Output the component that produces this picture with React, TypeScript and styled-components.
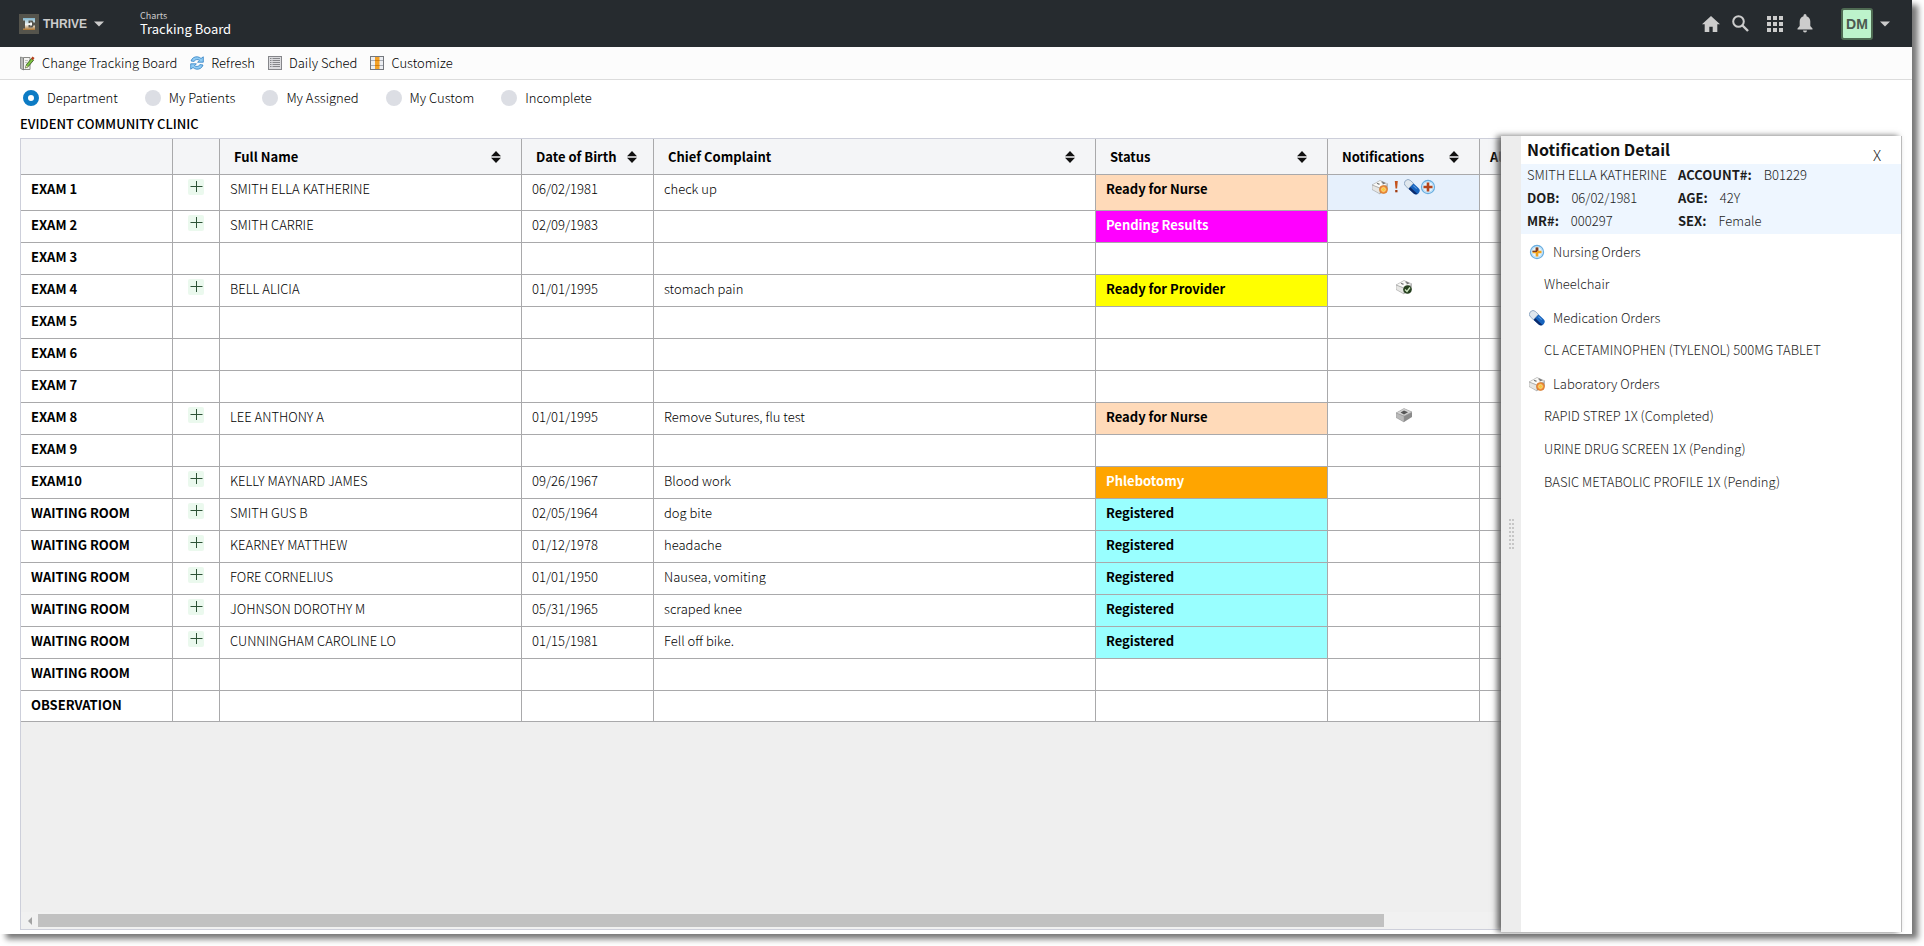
import React from "react";
import styled, { createGlobalStyle, css } from "styled-components";

const Global = createGlobalStyle`
  *, *::before, *::after { box-sizing: border-box; }
  body {
    margin: 0;
    background: #fff;
    color: #000;
    font: 300 13px/18px "Noto Sans CJK SC", sans-serif;
  }
  button { font: inherit; color: inherit; background: none; border: 0; padding: 0; margin: 0; cursor: pointer; }
`;

const Page = styled.div`
  height: 100vh;
  padding: 0 12px 12px 0;
`;

const Window = styled.div`
  position: relative;
  height: 100%;
  display: flex;
  flex-direction: column;
  background: #fff;
  box-shadow: 6px 5px 6px #777;
`;

/* ---------- header ---------- */

const Header = styled.header`
  display: flex;
  align-items: center;
  height: 47px;
  flex: none;
  padding: 0 22px 0 19px;
  background: #262b2f;
  color: #ccc;
`;

const Brand = styled.button`
  display: flex;
  align-items: center;
  gap: 4px;
  width: 121px;
  font: bold 12px/20px "Liberation Sans", Arial, sans-serif;
  svg:last-child { margin-left: 3px; }
`;

const Crumbs = styled.div`
  flex: 1;
  display: flex;
  flex-direction: column;
  padding-bottom: 2px;
`;

const CrumbParent = styled.span`
  font-size: 9px;
  line-height: 12px;
  font-weight: 400;
`;

const CrumbTitle = styled.h1`
  margin: 0;
  font-size: 13px;
  line-height: 14px;
  font-weight: 400;
  color: #fff;
`;

const HeaderTools = styled.nav`
  display: flex;
  align-items: center;
  button { display: flex; }
`;

const ToolGap = styled.span<{ $w: number }>`
  width: ${(p) => p.$w}px;
`;

const Avatar = styled.span`
  display: block;
  width: 32px;
  height: 32px;
  border: 2px solid #4f6b53;
  border-radius: 3px;
  background: #bdf3cb;
  color: #4c5a50;
  text-align: center;
  font: bold 14px/28px "Liberation Sans", Arial, sans-serif;
`;

/* ---------- toolbar ---------- */

const Toolbar = styled.div`
  display: flex;
  align-items: center;
  gap: 13px;
  height: 33px;
  flex: none;
  padding: 0 20px;
  background: #fcfcfc;
  border-bottom: 1px solid #dcdcdc;
`;

const ToolButton = styled.button`
  display: flex;
  align-items: center;
  gap: 7px;
`;

const Filters = styled.fieldset`
  display: flex;
  gap: 27px;
  flex: none;
  border: 0;
  margin: 0;
  padding: 9px 23px;
`;

const FilterLabel = styled.label`
  display: flex;
  align-items: center;
  gap: 8px;
`;

const Radio = styled.input`
  appearance: none;
  width: 16px;
  height: 16px;
  margin: 0;
  border-radius: 50%;
  background: #dcdee4;
  &:checked {
    background: #fff;
    border: 5px solid #0c7bc4;
  }
`;

const Clinic = styled.h2`
  margin: 0;
  padding: 0 20px;
  flex: none;
  height: 22px;
  font-size: 13px;
  line-height: 16px;
  font-weight: 500;
`;

/* ---------- grid ---------- */

const Board = styled.main`
  flex: 1;
  min-height: 0;
  margin: 0 10px 4px 20px;
  display: flex;
  flex-direction: column;
  border: 1px solid #cdcfda;
  background: #efefef;
  overflow: hidden;
`;

const GridScroll = styled.div`
  flex: 1;
  min-height: 0;
  overflow: hidden;
`;

const Grid = styled.table`
  width: 1920px;
  table-layout: fixed;
  border-collapse: separate;
  border-spacing: 0;
  background: #fff;
`;

const HeadCell = styled.th<{ $pad?: string }>`
  height: 36px;
  padding: ${(p) => p.$pad || "0 20px 0 14px"};
  border: solid #a9a9ab;
  border-width: 0 1px 1px 0;
  background: #f4f5f7;
  text-align: left;
`;

const HeadInner = styled.button`
  display: flex;
  align-items: center;
  justify-content: space-between;
  width: 100%;
  font-weight: 700;
  white-space: nowrap;
`;

const cell = css`
  padding: 5px 10px 0;
  border: solid #a9a9ab;
  border-width: 0 1px 1px 0;
  text-align: left;
  vertical-align: top;
`;

const Row = styled.tr<{ $tall?: boolean }>`
  height: ${(p) => (p.$tall ? 36 : 32)}px;
  &:last-child { height: 31px; }
`;

const Cell = styled.td`
  ${cell}
`;

const IconCell = styled.td<{ $selected?: boolean }>`
  ${cell}
  padding-top: 4px;
  background: ${(p) => (p.$selected ? "#e6f0fc" : "#fff")};
`;

const RoomCell = styled.th`
  ${cell}
  font-weight: 700;
`;

const StatusCell = styled.td<{ $bg?: string; $fg?: string }>`
  ${cell}
  font-weight: 700;
  background: ${(p) => p.$bg || "#fff"};
  color: ${(p) => p.$fg || "#000"};
`;

const AddButton = styled.button`
  display: block;
  width: 16px;
  height: 16px;
  margin: 0 auto;
  border-radius: 2px;
  background: #ebf9ee;
  svg { display: block; }
`;

const IconRow = styled.div`
  display: flex;
  justify-content: center;
`;

const Scrollbar = styled.div`
  flex: none;
  display: flex;
  align-items: center;
  height: 17px;
  background: #f1f1f1;
`;

const ScrollArrow = styled.button`
  display: flex;
  justify-content: center;
  width: 17px;
`;

const Thumb = styled.div`
  width: 71.6%;
  height: 13px;
  background: #c1c1c1;
`;

/* ---------- detail panel ---------- */

const Panel = styled.aside`
  position: absolute;
  top: 136px;
  right: 10px;
  bottom: 2px;
  width: 401px;
  display: flex;
  background: #fff;
  border-right: 1px solid #bbb;
  box-shadow: -4px 0 6px #666;
`;

const Splitter = styled.div`
  flex: none;
  display: flex;
  align-items: center;
  justify-content: center;
  width: 20px;
  background: #ededed;
`;

const PanelBody = styled.div`
  flex: 1;
  color: #1c1c1c;
`;

const PanelHead = styled.div`
  display: flex;
  justify-content: space-between;
  height: 28px;
  padding: 0 20px 0 6px;
`;

const PanelTitle = styled.h2`
  margin: 0;
  font-size: 16px;
  line-height: 26px;
  font-weight: 700;
  color: #111;
`;

const Close = styled.button`
  padding-top: 10px;
  font-size: 15px;
`;

const Info = styled.dl`
  display: grid;
  grid-template-columns: 151px 1fr;
  row-gap: 1px;
  margin: 0;
  padding: 0 6px 2px;
  background: #eef6ff;
  line-height: 22px;
`;

const InfoItem = styled.div`
  display: flex;
  gap: 12px;
  white-space: nowrap;
  dt { font-weight: 700; }
  dd { margin: 0; }
`;

const Orders = styled.div`
  padding: 0 8px;
`;

const OrderHead = styled.h3`
  display: flex;
  align-items: center;
  gap: 8px;
  margin: 0;
  padding-top: 2px;
  font-size: 13px;
  line-height: 32px;
  font-weight: 300;
`;

const OrderList = styled.ul`
  list-style: none;
  margin: 0;
  padding: 0 0 0 15px;
  line-height: 32px;
  li + li { margin-top: 1px; }
`;

/* ---------- icons ---------- */

const Caret = () => (
  <svg width="10" height="6" viewBox="0 0 10 6"><path d="M0 .5h10L5 5.5z" fill="#ccc" /></svg>
);

const Logo = () => (
  <svg width="20" height="20" viewBox="0 0 20 20">
    <defs>
      <linearGradient id="logo" x1="0" y1="0" x2="0" y2="1">
        <stop offset="0" stopColor="#7fb4cc" /><stop offset=".55" stopColor="#f2f4f2" /><stop offset="1" stopColor="#a86f2a" />
      </linearGradient>
    </defs>
    <rect width="20" height="20" fill="#55544c" />
    <path d="M4 4h12v4.500h-1.500L13.500 6.500H9.500v2.500h3v2h-3v2.500h4l1-2H16V16H4v-1.500h2V6.500H4z" fill="url(#logo)" />
    <path d="M11.500 7.500l1.500 1.500v2l-1.500 1.500z" fill="#fff" />
  </svg>
);

const HomeIcon = () => (
  <svg width="18" height="16" viewBox="0 0 18 16"><path d="M9 0L0 8.200h2.700V16h4.600v-5.200h3.400V16h4.600V8.200H18z" fill="#ccc" /></svg>
);

const SearchIcon = () => (
  <svg width="17" height="17" viewBox="0 0 17 17" fill="none" stroke="#ccc">
    <circle cx="6.500" cy="6.500" r="5.300" strokeWidth="2" /><path d="M10.500 10.500l5.500 5.500" strokeWidth="2.400" />
  </svg>
);

const AppsIcon = () => (
  <svg width="16" height="16" viewBox="0 0 16 16" fill="#ccc">
    {[0, 6, 12].map((y) => [0, 6, 12].map((x) => <rect key={`${x}-${y}`} x={x} y={y} width="4" height="4" />))}
  </svg>
);

const BellIcon = () => (
  <svg width="16" height="19" viewBox="0 0 16 19" fill="#ccc">
    <path d="M8 0a1.500 1.500 0 0 0-1.500 1.500v.7C4 2.900 2.700 5 2.700 7.600V12L.5 14.600v1h15v-1L13.300 12V7.600C13.300 5 12 2.900 9.500 2.200v-.7A1.500 1.500 0 0 0 8 0zM6 16.600a2 2 0 0 0 4 0z" />
  </svg>
);

const EditIcon = () => (
  <svg width="15" height="15" viewBox="0 0 15 15">
    <path d="M3.500 1.500H10v12H3z" fill="#f4f4f1" stroke="#8a8a86" />
    <path d="M.5 1l3 1v12l-3-1.500z" fill="#b9bab8" stroke="#6f706e" strokeWidth=".7" />
    <path d="M5 4.500h3M5 6.500h2" stroke="#c4c4c0" />
    <path d="M5.500 12l1-3.500L11.500 2.500l2 1.800-5.500 6.500z" fill="#7cc440" stroke="#2f4d1a" strokeWidth=".8" />
    <path d="M11 2.500L12.500.6l2 1.400-1.500 2.200z" fill="#b8401c" />
    <path d="M5.500 12l.8-2.500 1.500 1.300z" fill="#efe2b0" />
  </svg>
);

const RefreshIcon = () => (
  <svg width="14" height="14" viewBox="0 0 14 14">
    <path d="M1 5C2 1.900 4.700.5 7.500.8c1.400.2 2.600.8 3.500 1.700L13.300.8v5.400H7.600l1.900-1.900C8 3.100 5.500 3.200 4 5.400z" fill="#8fcbf3" stroke="#2f7fc4" strokeWidth=".8" />
    <path d="M13 9c-1 3.100-3.700 4.500-6.500 4.200-1.400-.2-2.600-.8-3.500-1.700L.7 13.200V7.800h5.700L4.500 9.700C6 10.900 8.500 10.800 10 8.600z" fill="#8fcbf3" stroke="#2f7fc4" strokeWidth=".8" />
  </svg>
);

const SchedIcon = () => (
  <svg width="14" height="14" viewBox="0 0 14 14">
    <rect x=".5" y=".5" width="13" height="13" fill="#dcdcdf" stroke="#85868a" />
    {[2, 4, 6, 8, 10].map((y) => <path key={y} d={`M2 ${y}.5h1.500M4.500 ${y}.5H12`} stroke="#85868a" />)}
  </svg>
);

const ColumnsIcon = () => (
  <svg width="14" height="14" viewBox="0 0 14 14">
    <rect x=".5" y=".5" width="13" height="13" fill="#eceef2" stroke="#74777d" />
    <path d="M1 4.500h12M1 9.500h12" stroke="#a6abb5" />
    <rect x="5" y="1" width="4.500" height="12" fill="#f2a128" />
    <path d="M5 4.500h4.500M5 9.500h4.500" stroke="#cf7c10" />
  </svg>
);

const SortIcon = () => (
  <svg width="10" height="12" viewBox="0 0 10 12" fill="#111"><path d="M5 0l5 5.300H0zM5 12L0 6.700h10z" /></svg>
);

const PlusIcon = () => (
  <svg width="16" height="16" viewBox="0 0 16 16"><path d="M8.500 2v11M2.500 7.500h12" stroke="#2d5236" /></svg>
);

const Box = ({ badge, dark }: { badge?: "pending" | "done"; dark?: boolean }) => (
  <svg width="16" height="16" viewBox="0 0 16 16">
    <path d="M0 6L8 1.500 16 5v5L8 15 0 10z" fill={dark ? "#8b8b8b" : "#b9b9b9"} />
    <path d="M0 6L8 1.500 16 5 8 9z" fill={dark ? "#d4d4d4" : "#fafaf8"} stroke="#a5a5a5" strokeWidth=".5" />
    <path d="M0 6l8 3.200V15l-8-4.500z" fill={dark ? "#b9b9b9" : "#e6e6e4"} stroke="#999" strokeWidth=".5" />
    {dark ? <path d="M4.500 5.500L8 3.500l4 1.800-4 2.200z" fill="#555" /> : <path d="M5 4.200l2.500 1.200M9.500 2.800l3 1.400-2 .8" fill="none" stroke="#777" strokeWidth="1.200" />}
    {badge === "pending" && (
      <><circle cx="11.500" cy="10.500" r="4" fill="#f0913c" stroke="#c9691c" strokeWidth=".6" /><circle cx="11.500" cy="10.500" r="2" fill="#f8c93a" stroke="#fbe2a8" strokeWidth=".6" /></>
    )}
    {badge === "done" && (
      <><circle cx="11.500" cy="10.500" r="4.300" fill="#26401f" /><path d="M9 10.500l2 2 3-4" fill="none" stroke="#cfe8c2" strokeWidth="1.300" /></>
    )}
  </svg>
);

const Alert = () => (
  <svg width="16" height="16" viewBox="0 0 16 16">
    <path d="M6.800 2h3l-.7 7.500H7.500z" fill="#c4521c" /><rect x="7.200" y="11" width="2.300" height="2.300" fill="#a13c10" />
  </svg>
);

const Pill = () => (
  <svg width="16" height="16" viewBox="0 0 16 16">
    <g transform="rotate(43 8 8)">
      <rect x="-1" y="4.300" width="18" height="7.400" rx="3.700" fill="#1763bd" />
      <path d="M6.500 4.300H2.700a3.700 3.700 0 0 0 0 7.400H6.500z" fill="#dfe7ee" stroke="#8fa0b2" strokeWidth=".6" />
      <path d="M7 9.300h9.700a3.700 3.700 0 0 1-3.400 2.400H7z" fill="#0b2a6b" />
      <path d="M8 6h4.500" stroke="#5c9ae2" />
    </g>
  </svg>
);

const Nursing = ({ gold }: { gold?: boolean }) => (
  <svg width="16" height="16" viewBox="0 0 16 16">
    <circle cx="8" cy="8" r="6.500" fill="#e3f3ff" stroke="#69aee0" strokeWidth="1.300" />
    <circle cx="8" cy="8" r="5.300" fill="none" stroke="#b8def8" />
    <path d="M6.700 3.500h2.600v3.200h3.200v2.600H9.300v3.200H6.700V9.300H3.500V6.700h3.200z" fill={gold ? "#f0a21c" : "#b5451b"} />
    {gold && <path d="M6.700 3.500h2.600v3.200H8V8H3.500V6.700h3.200z" fill="#7a3b2a" />}
  </svg>
);

const Grip = () => (
  <svg width="5" height="30" viewBox="0 0 5 30" fill="#c6c6c6">
    {[0, 4, 8, 12, 16, 20, 24, 28].map((y) => <React.Fragment key={y}><rect y={y} width="2" height="2" /><rect x="3" y={y} width="2" height="2" /></React.Fragment>)}
  </svg>
);

/* ---------- data ---------- */

type Status = "nurse" | "pending" | "provider" | "phleb" | "reg";

const STATUS: Record<Status, { text: string; bg: string; fg?: string }> = {
  nurse: { text: "Ready for Nurse", bg: "#ffdab9" },
  pending: { text: "Pending Results", bg: "#ff00ff", fg: "#fff" },
  provider: { text: "Ready for Provider", bg: "#ffff00" },
  phleb: { text: "Phlebotomy", bg: "#ffa500", fg: "#fff" },
  reg: { text: "Registered", bg: "#99ffff" },
};

type Entry = { room: string; name?: string; dob?: string; complaint?: string; status?: Status; icons?: React.ReactNode };

const ROWS: Entry[] = [
  { room: "EXAM 1", name: "SMITH ELLA KATHERINE", dob: "06/02/1981", complaint: "check up", status: "nurse", icons: <><Box badge="pending" /><Alert /><Pill /><Nursing /></> },
  { room: "EXAM 2", name: "SMITH CARRIE", dob: "02/09/1983", status: "pending" },
  { room: "EXAM 3" },
  { room: "EXAM 4", name: "BELL ALICIA", dob: "01/01/1995", complaint: "stomach pain", status: "provider", icons: <Box badge="done" /> },
  { room: "EXAM 5" },
  { room: "EXAM 6" },
  { room: "EXAM 7" },
  { room: "EXAM 8", name: "LEE ANTHONY A", dob: "01/01/1995", complaint: "Remove Sutures, flu test", status: "nurse", icons: <Box dark /> },
  { room: "EXAM 9" },
  { room: "EXAM10", name: "KELLY MAYNARD JAMES", dob: "09/26/1967", complaint: "Blood work", status: "phleb" },
  { room: "WAITING ROOM", name: "SMITH GUS B", dob: "02/05/1964", complaint: "dog bite", status: "reg" },
  { room: "WAITING ROOM", name: "KEARNEY MATTHEW", dob: "01/12/1978", complaint: "headache", status: "reg" },
  { room: "WAITING ROOM", name: "FORE CORNELIUS", dob: "01/01/1950", complaint: "Nausea, vomiting", status: "reg" },
  { room: "WAITING ROOM", name: "JOHNSON DOROTHY M", dob: "05/31/1965", complaint: "scraped knee", status: "reg" },
  { room: "WAITING ROOM", name: "CUNNINGHAM CAROLINE LO", dob: "01/15/1981", complaint: "Fell off bike.", status: "reg" },
  { room: "WAITING ROOM" },
  { room: "OBSERVATION" },
];

const COLUMNS: { label: string; width: number; pad?: string }[] = [
  { label: "", width: 152 },
  { label: "", width: 47 },
  { label: "Full Name", width: 302 },
  { label: "Date of Birth", width: 132, pad: "0 16px 0 14px" },
  { label: "Chief Complaint", width: 442 },
  { label: "Status", width: 232 },
  { label: "Notifications", width: 152 },
  { label: "Alerts", width: 461, pad: "0 10px" },
];

const FILTERS = ["Department", "My Patients", "My Assigned", "My Custom", "Incomplete"];

const TOOLS = [
  { label: "Change Tracking Board", icon: <EditIcon /> },
  { label: "Refresh", icon: <RefreshIcon /> },
  { label: "Daily Sched", icon: <SchedIcon /> },
  { label: "Customize", icon: <ColumnsIcon /> },
];

const INFO = [
  ["", "SMITH ELLA KATHERINE"],
  ["ACCOUNT#:", "B01229"],
  ["DOB:", "06/02/1981"],
  ["AGE:", "42Y"],
  ["MR#:", "000297"],
  ["SEX:", "Female"],
];

const ORDERS = [
  { title: "Nursing Orders", icon: <Nursing gold />, items: ["Wheelchair"] },
  { title: "Medication Orders", icon: <Pill />, items: ["CL ACETAMINOPHEN (TYLENOL) 500MG TABLET"] },
  { title: "Laboratory Orders", icon: <Box badge="pending" />, items: ["RAPID STREP 1X (Completed)", "URINE DRUG SCREEN 1X (Pending)", "BASIC METABOLIC PROFILE 1X (Pending)"] },
];

export default function App() {
  return (
    <Page>
      <Global />
      <Window>
        <Header>
          <Brand><Logo />THRIVE<Caret /></Brand>
          <Crumbs>
            <CrumbParent>Charts</CrumbParent>
            <CrumbTitle>Tracking Board</CrumbTitle>
          </Crumbs>
          <HeaderTools>
            <button aria-label="Home"><HomeIcon /></button>
            <ToolGap $w={12} />
            <button aria-label="Search"><SearchIcon /></button>
            <ToolGap $w={18} />
            <button aria-label="Apps"><AppsIcon /></button>
            <ToolGap $w={14} />
            <button aria-label="Alerts"><BellIcon /></button>
            <ToolGap $w={28} />
            <Avatar>DM</Avatar>
            <ToolGap $w={7} />
            <button aria-label="Account menu"><Caret /></button>
          </HeaderTools>
        </Header>
        <Toolbar>
          {TOOLS.map((t) => <ToolButton key={t.label}>{t.icon}{t.label}</ToolButton>)}
        </Toolbar>
        <Filters>
          {FILTERS.map((f, i) => (
            <FilterLabel key={f}><Radio type="radio" name="view" defaultChecked={i === 0} />{f}</FilterLabel>
          ))}
        </Filters>
        <Clinic>EVIDENT COMMUNITY CLINIC</Clinic>
        <Board>
          <GridScroll>
            <Grid>
              <colgroup>{COLUMNS.map((c, i) => <col key={i} style={{ width: c.width }} />)}</colgroup>
              <thead>
                <tr>
                  {COLUMNS.map((c, i) => (
                    <HeadCell key={i} $pad={c.pad}>{c.label && <HeadInner>{c.label}<SortIcon /></HeadInner>}</HeadCell>
                  ))}
                </tr>
              </thead>
              <tbody>
                {ROWS.map((r, i) => {
                  const s = r.status && STATUS[r.status];
                  return (
                    <Row key={i} $tall={i === 0}>
                      <RoomCell scope="row">{r.room}</RoomCell>
                      <IconCell>{r.name && <AddButton aria-label={`Add for ${r.name}`}><PlusIcon /></AddButton>}</IconCell>
                      <Cell>{r.name}</Cell>
                      <Cell>{r.dob}</Cell>
                      <Cell>{r.complaint}</Cell>
                      <StatusCell $bg={s?.bg} $fg={s?.fg}>{s?.text}</StatusCell>
                      <IconCell $selected={i === 0}><IconRow>{r.icons}</IconRow></IconCell>
                      <Cell />
                    </Row>
                  );
                })}
              </tbody>
            </Grid>
          </GridScroll>
          <Scrollbar>
            <ScrollArrow aria-label="Scroll left">
              <svg width="4" height="8" viewBox="0 0 4 8"><path d="M4 0v8L0 4z" fill="#a3a3a3" /></svg>
            </ScrollArrow>
            <Thumb />
          </Scrollbar>
        </Board>
        <Panel>
          <Splitter><Grip /></Splitter>
          <PanelBody>
            <PanelHead>
              <PanelTitle>Notification Detail</PanelTitle>
              <Close aria-label="Close">X</Close>
            </PanelHead>
            <Info>
              {INFO.map(([k, v]) => (
                <InfoItem key={v}>{k && <dt>{k}</dt>}<dd>{v}</dd></InfoItem>
              ))}
            </Info>
            <Orders>
              {ORDERS.map((o) => (
                <section key={o.title}>
                  <OrderHead>{o.icon}{o.title}</OrderHead>
                  <OrderList>{o.items.map((x) => <li key={x}>{x}</li>)}</OrderList>
                </section>
              ))}
            </Orders>
          </PanelBody>
        </Panel>
      </Window>
    </Page>
  );
}
